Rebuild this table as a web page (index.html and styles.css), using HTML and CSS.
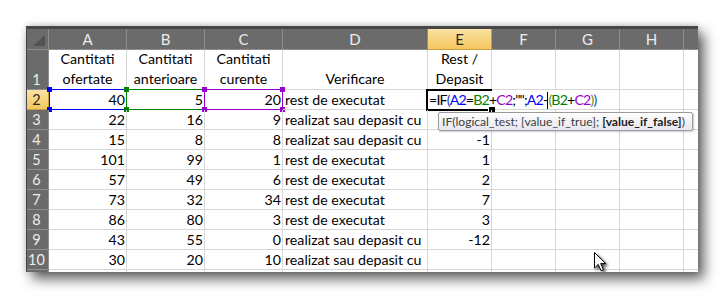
FILE: index.html
```html
<!DOCTYPE html>
<html>
<head>
<meta charset="utf-8">
<link rel="stylesheet" href="styles.css">
</head>
<body>
<div class="frame">
  <div class="sheet">
    <div class="c hd corner"><span class="tri"></span></div>
    <div class="c hd">A</div><div class="c hd">B</div><div class="c hd">C</div><div class="c hd">D</div>
    <div class="c hd sel">E</div><div class="c hd">F</div><div class="c hd">G</div><div class="c hd">H</div><div class="c hd"></div>

    <div class="c rh tall">1</div>
    <div class="c t1">Cantitati<br>ofertate</div>
    <div class="c t1">Cantitati<br>anterioare</div>
    <div class="c t1">Cantitati<br>curente</div>
    <div class="c t1">Verificare</div>
    <div class="c t1">Rest /<br>Depasit</div>
    <div class="c"></div><div class="c"></div><div class="c"></div><div class="c"></div>

    <div class="c rh sel">2</div>
    <div class="c n ref"><span class="box blue lft"><i class="h tl"></i><i class="h tr"></i><i class="h bl"></i><i class="h br"></i></span>40</div>
    <div class="c n ref"><span class="box green"><i class="h tl"></i><i class="h tr"></i><i class="h bl"></i><i class="h br"></i></span>5</div>
    <div class="c n ref"><span class="box purple"><i class="h tl"></i><i class="h tr"></i><i class="h bl"></i><i class="h br"></i></span>20</div>
    <div class="c s">rest de executat</div>
    <div class="c edit"><span class="active"><i class="fill"></i></span><span class="fx">=IF<b class="po">(</b><b class="cb">A2</b>=<b class="cg">B2</b>+<b class="cp">C2</b>;"";<b class="cb">A2</b>-<i class="caret"></i><b class="pi">(</b><b class="cg">B2</b>+<b class="cp">C2</b><b class="pi">)</b><b class="po">)</b></span></div>
    <div class="c"></div><div class="c"></div>

    <div class="c rh">3</div><div class="c n">22</div><div class="c n">16</div><div class="c n">9</div><div class="c s">realizat sau depasit cu</div><div class="c n"></div><div class="c"></div><div class="c"></div><div class="c"></div><div class="c"></div>
    <div class="c rh">4</div><div class="c n">15</div><div class="c n">8</div><div class="c n">8</div><div class="c s">realizat sau depasit cu</div><div class="c n">-1</div><div class="c"></div><div class="c"></div><div class="c"></div><div class="c"></div>
    <div class="c rh">5</div><div class="c n">101</div><div class="c n">99</div><div class="c n">1</div><div class="c s">rest de executat</div><div class="c n">1</div><div class="c"></div><div class="c"></div><div class="c"></div><div class="c"></div>
    <div class="c rh">6</div><div class="c n">57</div><div class="c n">49</div><div class="c n">6</div><div class="c s">rest de executat</div><div class="c n">2</div><div class="c"></div><div class="c"></div><div class="c"></div><div class="c"></div>
    <div class="c rh">7</div><div class="c n">73</div><div class="c n">32</div><div class="c n">34</div><div class="c s">rest de executat</div><div class="c n">7</div><div class="c"></div><div class="c"></div><div class="c"></div><div class="c"></div>
    <div class="c rh">8</div><div class="c n">86</div><div class="c n">80</div><div class="c n">3</div><div class="c s">rest de executat</div><div class="c n">3</div><div class="c"></div><div class="c"></div><div class="c"></div><div class="c"></div>
    <div class="c rh">9</div><div class="c n">43</div><div class="c n">55</div><div class="c n">0</div><div class="c s">realizat sau depasit cu</div><div class="c n">-12</div><div class="c"></div><div class="c"></div><div class="c"></div><div class="c"></div>
    <div class="c rh">10</div><div class="c n">30</div><div class="c n">20</div><div class="c n">10</div><div class="c s">realizat sau depasit cu</div><div class="c n"></div><div class="c"></div><div class="c"></div><div class="c"></div><div class="c"></div>
    <div class="c rh"></div><div class="c"></div><div class="c"></div><div class="c"></div><div class="c"></div><div class="c"></div><div class="c"></div><div class="c"></div><div class="c"></div><div class="c"></div>
  </div>

  <div class="tip">IF(logical_test; [value_if_true]; <b>[value_if_false]</b>)</div>

  <svg class="cursor" width="16" height="22" viewBox="0 0 16 22">
    <path d="M1.5 1.5 L1.5 17 L5.2 13.4 L8 19.6 L10.4 18.6 L7.7 12.6 L12.8 12.6 Z" fill="#fff" stroke="#000" stroke-width="1" stroke-linejoin="miter"/>
  </svg>
</div>
</body>
</html>
```

FILE: styles.css
```css
html, body {
  margin: 0;
  padding: 0;
  background: #fff;
}
body {
  width: 725px;
  height: 298px;
  overflow: hidden;
}
.frame {
  position: relative;
  margin: 26px 0 0 26px;
  width: 672px;
  height: 246px;
  box-sizing: border-box;
  border-top: 3px solid #474747;
  border-left: 1px solid #474747;
  background: #fff;
  overflow: hidden;
  box-shadow: 0 -1px 6px rgba(0,0,0,0.16), 6px 7px 12px rgba(0,0,0,0.62);
}
.sheet {
  display: grid;
  grid-template-columns: 22px 78px 78px 78px 145px 64px 64px 64px 64px 64px;
  grid-template-rows: 21px 40px repeat(10, 20px);
  width: 721px;
  font-family: Lato, "Liberation Sans", sans-serif;
  font-size: 14.2px;
  color: #000;
}
.c {
  box-sizing: border-box;
  border-right: 1px solid #d6d6d6;
  border-bottom: 1px solid #d6d6d6;
  line-height: 19px;
  white-space: nowrap;
  position: relative;
}
.hd {
  background: #6b6b6b;
  color: #ececec;
  text-align: center;
  line-height: 20px;
  font-size: 15px;
  border-right-color: #8e8e8e;
  border-bottom-color: #8e8e8e;
}
.hd.sel, .rh.sel {
  background: linear-gradient(#fbe2a4, #f4c65c);
  color: #2b2b2b;
  border-right-color: #c9a040;
  border-bottom-color: #c9a040;
}
.corner .tri {
  position: absolute;
  right: 3px;
  bottom: 3px;
  width: 0;
  height: 0;
  border-left: 12px solid transparent;
  border-bottom: 11px solid #525252;
}
.rh {
  background: #6b6b6b;
  color: #ececec;
  text-align: center;
  font-size: 14.5px;
  padding-right: 2px;
  border-right-color: #8e8e8e;
  border-bottom-color: #8e8e8e;
}
.rh.tall {
  display: flex;
  align-items: flex-end;
  justify-content: center;
}
.t1 {
  display: flex;
  align-items: flex-end;
  justify-content: center;
  text-align: center;
  line-height: 20px;
}
.n {
  text-align: right;
  padding-right: 1px;
}
.s {
  text-align: left;
  padding-left: 2px;
}

/* range reference boxes */
.box {
  position: absolute;
  top: -1px;
  left: -1px;
  right: -1px;
  bottom: -1px;
  border: 1px solid currentColor;
  pointer-events: none;
}
.box.lft { left: 0; }
.blue { color: #0000ff; }
.green { color: #008000; }
.purple { color: #9900cc; }
.h {
  position: absolute;
  width: 5px;
  height: 5px;
  background: currentColor;
}
.h.tl { left: -3px; top: -3px; }
.h.tr { right: -3px; top: -3px; }
.h.bl { left: -3px; bottom: -3px; }
.h.br { right: -3px; bottom: -3px; }

/* editing cell */
.edit {
  grid-column: span 3;
  background: #fff;
  padding-left: 1px;
}
.active {
  position: absolute;
  left: -2px;
  top: -1px;
  width: 66px;
  height: 22px;
  box-sizing: border-box;
  border: 2px solid #000;
  border-right: none;
  pointer-events: none;
}
.fill {
  position: absolute;
  right: -3px;
  bottom: -4px;
  width: 6px;
  height: 6px;
  background: #000;
  border-left: 1px solid #fff;
  border-top: 1px solid #fff;
}
.fx {
  position: relative;
  letter-spacing: -0.85px;
}
.fx b { font-weight: normal; }
.cb { color: #0000ff; }
.cg { color: #008000; }
.cp { color: #9900cc; }
.po { color: #1f3fbf; }
.pi { color: #5f8f10; }
.caret {
  display: inline-block;
  width: 1px;
  height: 17px;
  background: #000;
  vertical-align: -4px;
  margin-right: 0;
}

/* tooltip */
.tip {
  position: absolute;
  left: 411px;
  top: 83px;
  width: 255px;
  height: 19px;
  box-sizing: border-box;
  border: 1px solid #9a9a9a;
  border-radius: 2px;
  background: linear-gradient(#ffffff, #e6e6ef);
  box-shadow: 1px 1px 2px rgba(0,0,0,0.2);
  font-family: Lato, "Liberation Sans", sans-serif;
  font-size: 12.1px;
  line-height: 17px;
  color: #3c3c3c;
  padding-left: 3px;
  white-space: nowrap;
}
.tip b { font-weight: 700; color: #222; }

.cursor {
  position: absolute;
  left: 566px;
  top: 222px;
  filter: drop-shadow(2px 2px 1.5px rgba(0,0,0,0.7));
}
```
